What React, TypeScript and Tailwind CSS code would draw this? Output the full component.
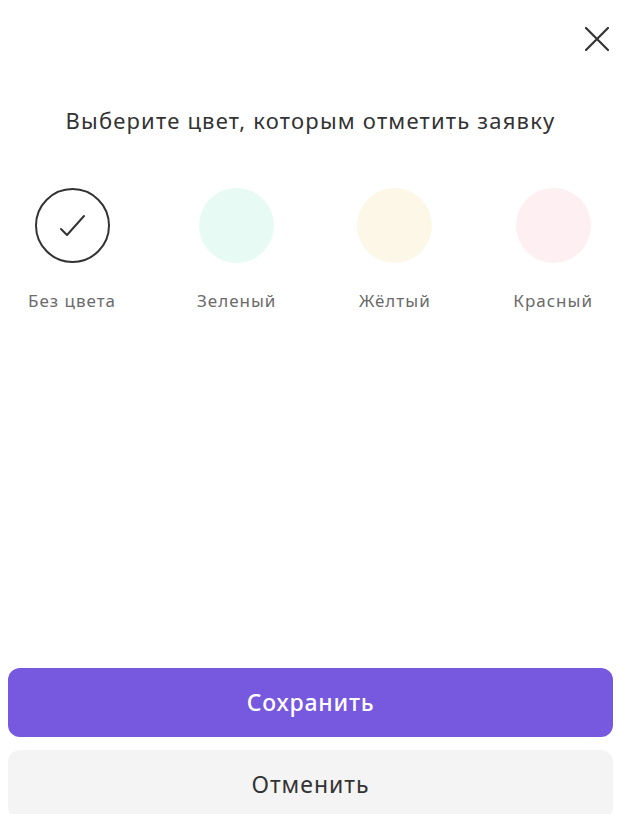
import { useState } from 'react'

type Swatch = { id: string; label: string; bg: string }

const swatches: Swatch[] = [
  { id: 'none', label: 'Без цвета', bg: 'bg-white' },
  { id: 'green', label: 'Зеленый', bg: 'bg-[#e8faf4]' },
  { id: 'yellow', label: 'Жёлтый', bg: 'bg-[#fdf7e8]' },
  { id: 'red', label: 'Красный', bg: 'bg-[#fdeff2]' },
]

function CloseIcon() {
  return (
    <svg width="24" height="24" viewBox="0 0 24 24" fill="none">
      <path d="M1 1L23 23M23 1L1 23" stroke="#333333" strokeWidth="2.2" strokeLinecap="round" />
    </svg>
  )
}

function CheckIcon() {
  return (
    <svg width="28" height="28" viewBox="0 0 28 28" fill="none">
      <path d="M3 17L9 23L26 4" stroke="#333333" strokeWidth="2" strokeLinecap="round" strokeLinejoin="round" />
    </svg>
  )
}

export default function App() {
  const [selected, setSelected] = useState('none')

  return (
    <div className="w-[621px] h-[814px] overflow-hidden bg-white flex flex-col font-['Noto_Sans',sans-serif]">
      {/* шапка с крестиком */}
      <div className="flex justify-end pt-[27px] pr-[12px]">
        <button className="w-6 h-6 flex items-center justify-center">
          <CloseIcon />
        </button>
      </div>

      <h2 className="mt-[55px] text-center text-[22px] leading-[28px] tracking-[1.2px] text-[#333333]">
        Выберите цвет, которым отметить заявку
      </h2>

      {/* выбор цвета */}
      <div className="mt-[54px] px-[28px] flex justify-between">
        {swatches.map((s) => (
          <button
            key={s.id}
            onClick={() => setSelected(s.id)}
            className="flex flex-col items-center"
          >
            <div
              className={`w-[75px] h-[75px] rounded-full flex items-center justify-center ${s.bg} ${
                s.id === 'none' ? 'border-2 border-[#333333]' : ''
              }`}
            >
              {selected === s.id && <CheckIcon />}
            </div>
            <span className="mt-[26px] text-[17px] leading-[24px] tracking-[1px] text-[#6b6b6b]">{s.label}</span>
          </button>
        ))}
      </div>

      {/* кнопки */}
      <div className="mt-[355px] px-2 flex flex-col gap-[13px]">
        <button className="h-[69px] shrink-0 rounded-[12px] bg-[#7759e0] text-white text-[23px] font-medium tracking-[0.8px]">
          Сохранить
        </button>
        <button className="h-[69px] shrink-0 rounded-[12px] bg-[#f4f4f4] text-[#333333] text-[23px] tracking-[1px]">
          Отменить
        </button>
      </div>
    </div>
  )
}
